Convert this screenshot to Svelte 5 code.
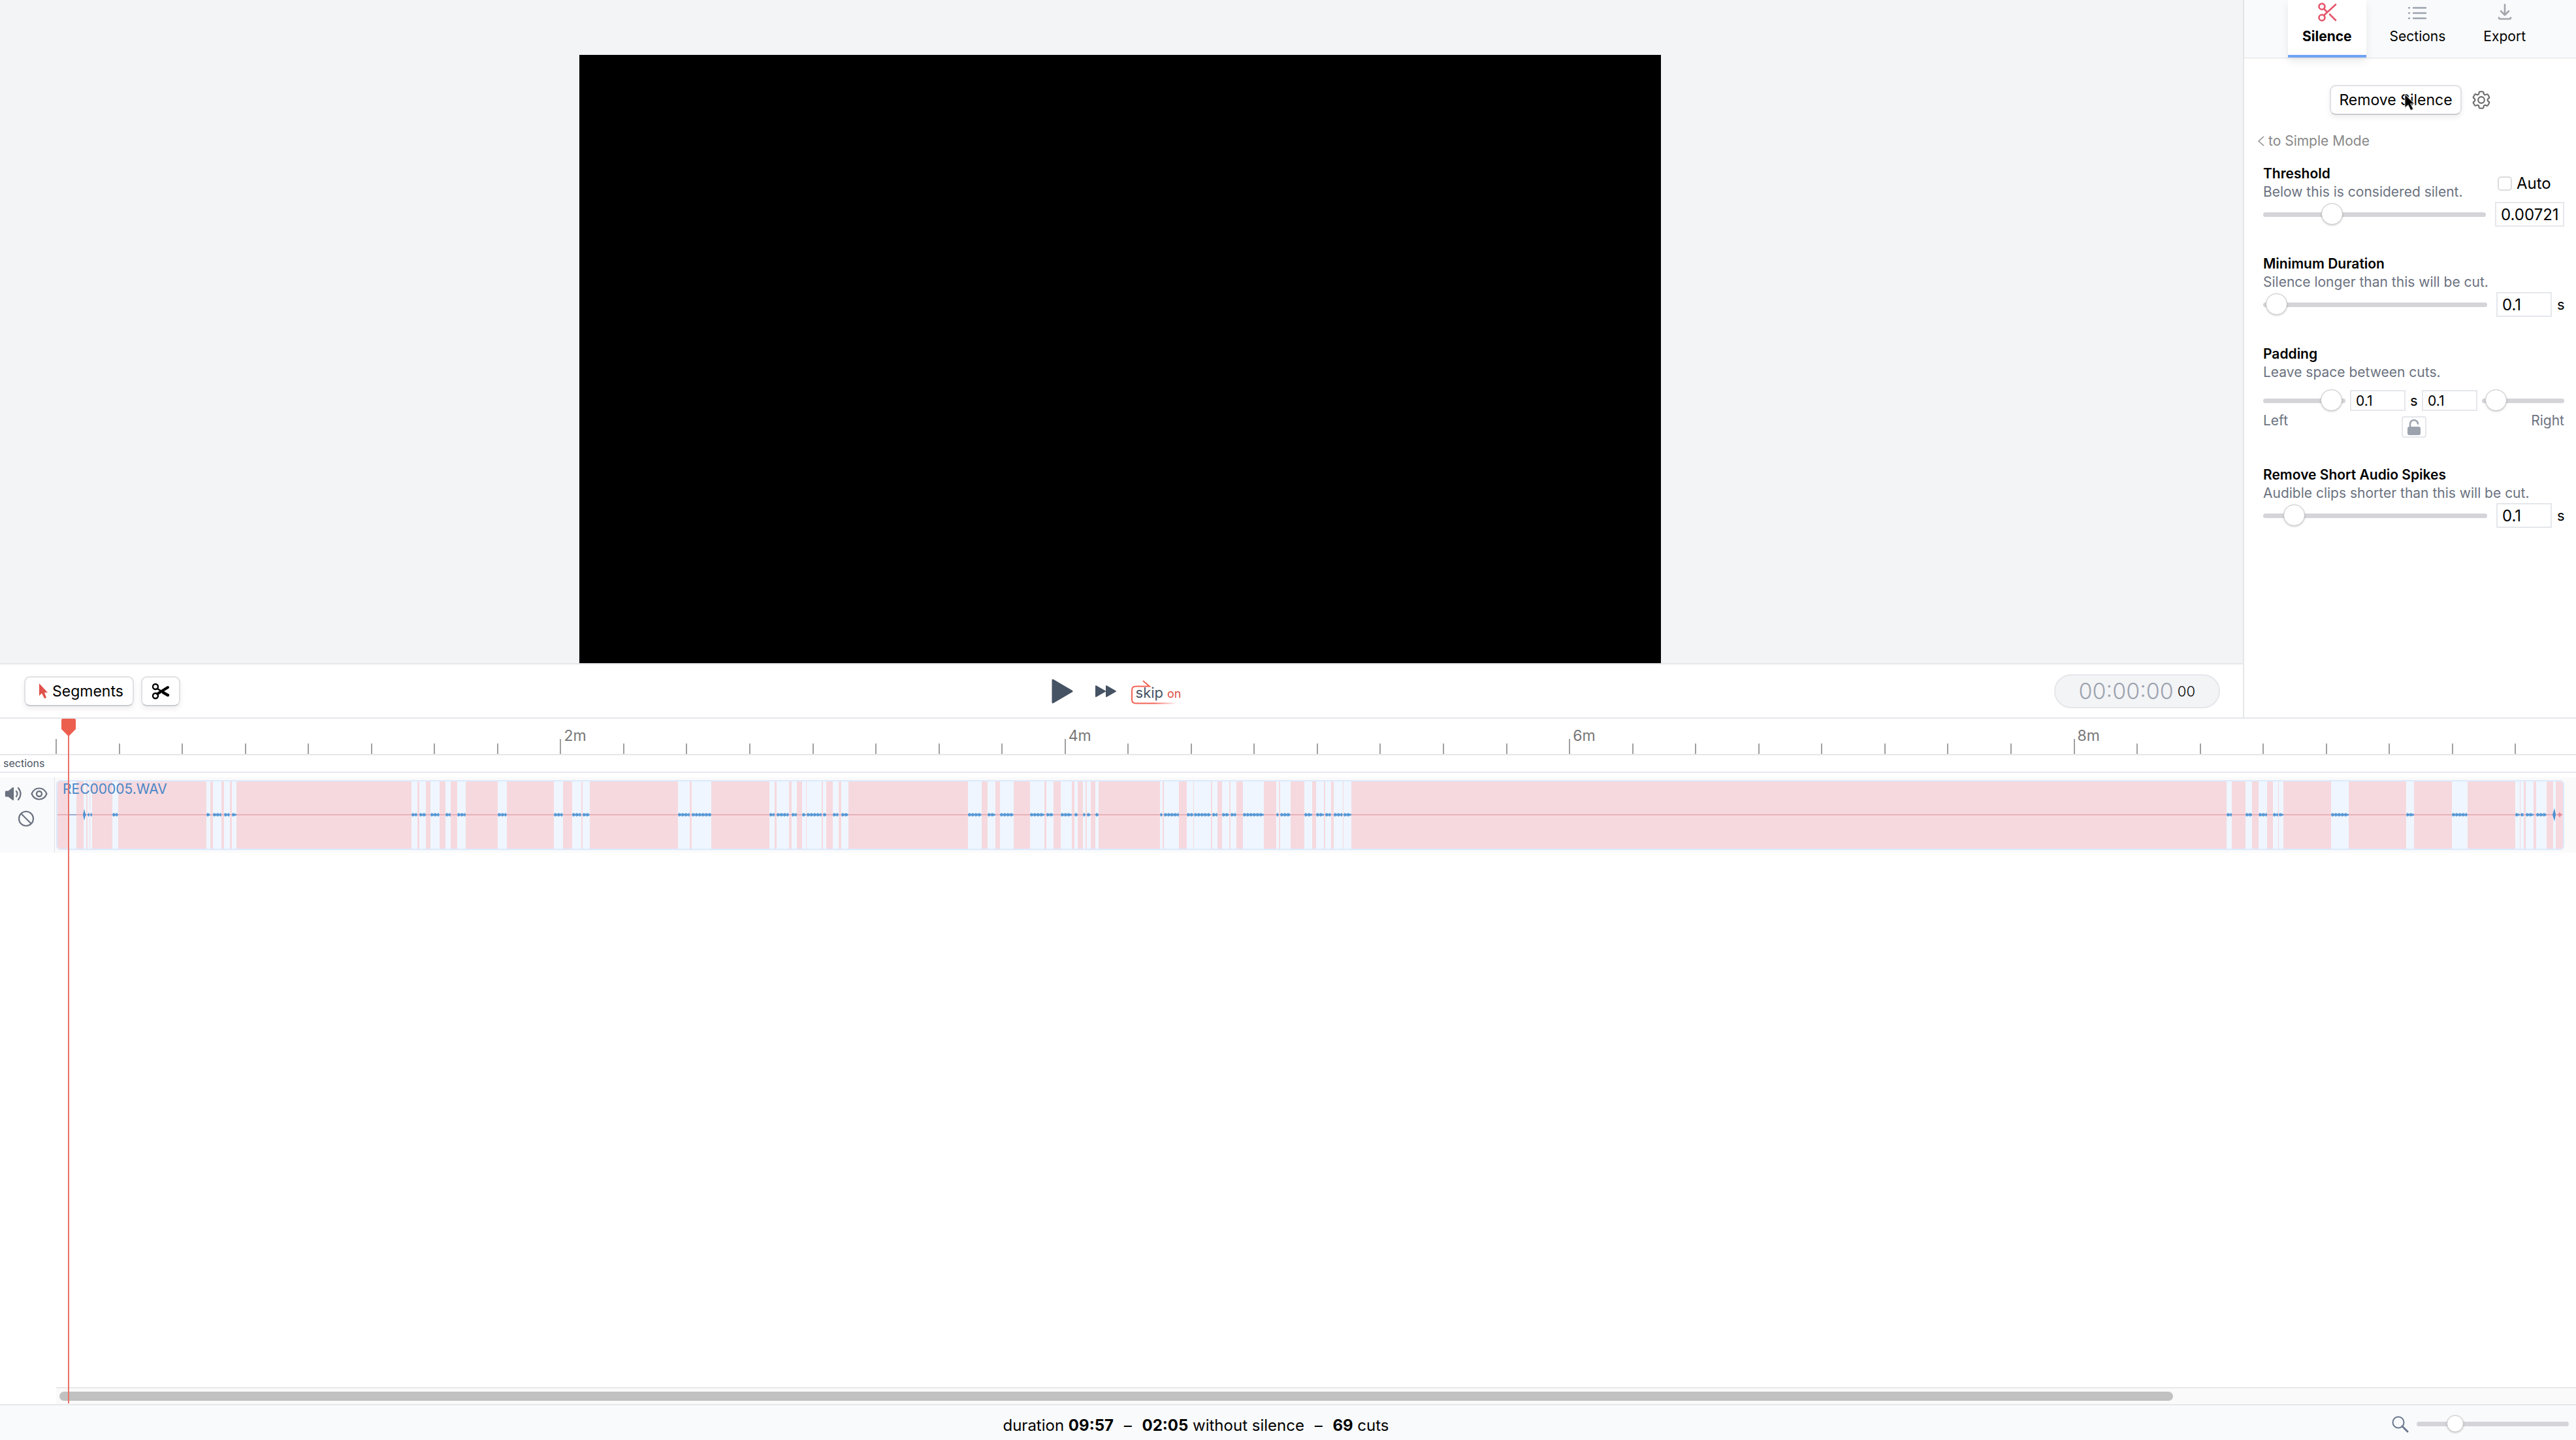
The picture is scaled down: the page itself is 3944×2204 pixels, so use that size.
<!--
  App.svelte -- Silence editor: preview, silence settings, transport and timeline.
-->
<script lang="ts">
  type Range = [start: number, end: number];

  const TABS = ['Silence', 'Sections', 'Export'];

  // Timeline scale: one tick per 15 s, one label per 2 min.
  const DURATION = 597;
  const TICK = 15;
  const ticks = Array.from({ length: Math.ceil(DURATION / TICK) }, (_, i) => {
    const start = i * TICK;
    return {
      span: Math.min(TICK, DURATION - start),
      major: start % 120 === 0,
      label: start > 0 && start % 120 === 0 ? `${start / 60}m` : '',
    };
  });

  // Audible ranges, in waveform columns.
  const COLUMNS = 3840;
  const MIDDLE = 53;
  const audible: Range[] = [
    [19, 31], [42, 46], [48, 51], [52, 55], [86, 95], [230, 236], [240, 253],
    [257, 266], [269, 276], [544, 553], [556, 566], [573, 587], [596, 604],
    [614, 627], [676, 690], [762, 776], [790, 804], [806, 817], [952, 970],
    [973, 1003], [1092, 1100], [1103, 1122], [1126, 1134], [1142, 1148],
    [1149, 1172], [1174, 1179], [1189, 1198], [1202, 1213], [1396, 1417],
    [1426, 1438], [1445, 1466], [1491, 1513], [1516, 1527], [1538, 1555],
    [1559, 1564], [1572, 1576], [1578, 1584], [1591, 1596], [1690, 1694],
    [1696, 1719], [1731, 1741], [1742, 1768], [1770, 1778], [1785, 1796],
    [1798, 1807], [1817, 1849], [1868, 1872], [1874, 1890], [1911, 1923],
    [1929, 1941], [1943, 1952], [1956, 1970], [1971, 1983], [3323, 3331],
    [3352, 3362], [3372, 3385], [3394, 3402], [3403, 3410], [3483, 3510],
    [3598, 3610], [3668, 3692], [3765, 3772], [3773, 3778], [3781, 3793],
    [3797, 3813], [3823, 3827],
  ];

  const silent = audible.map(([, end], i): Range => [end, audible[i + 1]?.[0] ?? COLUMNS]);
  silent.unshift([0, audible[0][0]]);

  function wave([start, end]: Range): string {
    const top: string[] = [];
    const bottom: string[] = [];
    for (let x = start; x <= end; x += 1) {
      const edge = x === start || x === end;
      const quiet = start < 30;
      const amp = quiet || edge ? 0.6 : 0.8 + ((x * 7 + start * 3) % 5) * 0.6;
      top.push(`${x},${MIDDLE - amp}`);
      bottom.unshift(`${x},${MIDDLE + amp}`);
    }
    return [...top, ...bottom].join(' ');
  }

  let tab = $state('Silence');
  let auto = $state(false);
  let threshold = $state(0.00721);
  let minDuration = $state(0.1);
  let padLeft = $state(0.1);
  let padRight = $state(0.1);
  let spikes = $state(0.1);
  let zoom = $state(22);
</script>

<div class="app">
  <div class="upper">
    <main class="editor">
      <div class="stage">
        <div class="video"></div>
      </div>

      <div class="toolbar">
        <div class="tools">
          <button class="btn">
            <svg width="15" height="24" viewBox="0 0 15 24" aria-hidden="true">
              <path d="M1 0v19l4-4 4 8 3-1-3-8h5z" fill="#e0524b" />
            </svg>
            Segments
          </button>
          <button class="btn btn-cut" aria-label="Split">
            <svg width="28" height="26" viewBox="0 0 28 26" fill="none" stroke="#000" aria-hidden="true">
              <circle cx="6" cy="6" r="4" stroke-width="2.4" />
              <circle cx="6" cy="20" r="4" stroke-width="2.4" />
              <path d="M9 17 25 7" stroke-width="4" stroke-linecap="round" />
              <path d="M9 9l6 4" stroke-width="2.4" />
              <path d="M18 15l7 4" stroke-width="4.4" stroke-linecap="round" />
            </svg>
          </button>
        </div>

        <div class="transport">
          <button class="plain" aria-label="Play">
            <svg width="33" height="38" viewBox="0 0 33 38" aria-hidden="true">
              <path d="M2 2v34l29-17z" fill="#465364" stroke="#465364" stroke-width="3" stroke-linejoin="round" />
            </svg>
          </button>
          <button class="plain" aria-label="Fast forward">
            <svg width="34" height="20" viewBox="0 0 34 20" aria-hidden="true">
              <path d="M2 2v16l14-8zM18 2v16l14-8z" fill="#465364" stroke="#465364" stroke-width="2" stroke-linejoin="round" />
            </svg>
          </button>
          <button class="plain skip">
            <svg width="76" height="38" viewBox="0 0 76 38" fill="none" aria-hidden="true">
              <defs>
                <linearGradient id="fade" gradientUnits="userSpaceOnUse" x1="0" y1="0" x2="72" y2="0">
                  <stop offset="0.5" stop-color="#f26355" />
                  <stop offset="1" stop-color="#f26355" stop-opacity="0" />
                </linearGradient>
              </defs>
              <path d="M19 2l10 8.500H8q-6 0-6 6v14q0 6 6 6h64" stroke="url(#fade)" stroke-width="2" />
            </svg>
            <span>skip</span>
            <span class="on">on</span>
          </button>
        </div>

        <div class="timecode">
          <span class="clock">00:00:00</span>
          <span class="frames">00</span>
        </div>
      </div>
    </main>

    <aside class="panel">
      <nav class="tabs">
        {#each TABS as name}
          <button class="tab" class:active={tab === name} onclick={() => (tab = name)}>
            {#if name === 'Silence'}
              <svg width="30" height="30" viewBox="0 0 30 30" fill="none" stroke="#e5566d" stroke-width="2.6" stroke-linecap="round" aria-hidden="true">
                <circle cx="7" cy="6" r="4.5" />
                <circle cx="7" cy="23" r="4.5" />
                <path d="M10 19.500 28 3M10 9.500l5 5M19 18l9 9" />
              </svg>
            {:else if name === 'Sections'}
              <svg width="30" height="30" viewBox="0 0 30 30" fill="none" stroke="#9ca3af" stroke-width="2.400" stroke-linecap="round" aria-hidden="true">
                <path d="M9 8h19M9 16h19M9 24h19M2 8h1M2 16h1M2 24h1" />
              </svg>
            {:else}
              <svg width="30" height="30" viewBox="0 0 30 30" fill="none" stroke="#a3a6ad" stroke-width="2.600" stroke-linecap="round" stroke-linejoin="round" aria-hidden="true">
                <path d="M15 3v16M9 13l6 6 6-6M6 23q0 2 2 2h14q2 0 2-2" />
              </svg>
            {/if}
            {name}
          </button>
        {/each}
      </nav>

      <div class="settings">
        <div class="actions">
          <button class="btn">Remove Silence</button>
          <button class="plain" aria-label="Silence settings">
            <svg width="34" height="34" viewBox="0 0 24 24" fill="none" stroke="#6b6b6b" stroke-width="1.500" stroke-linejoin="round" aria-hidden="true">
              <path d="M9.600 3.900c.1-.6.600-.9 1.100-.9h2.600c.5 0 1 .4 1.100.9l.2 1.300c.1.400.3.700.6.900l.3.200c.4.200.8.200 1.100.1l1.200-.5c.5-.2 1.100 0 1.400.5l1.300 2.200c.3.500.2 1.100-.3 1.400l-1 .8c-.3.300-.4.600-.4 1v.4c0 .4.100.7.400 1l1 .8c.4.400.5 1 .3 1.400l-1.300 2.200c-.3.500-.9.700-1.400.5l-1.200-.5c-.4-.1-.8-.1-1.100.1l-.3.200c-.3.200-.6.500-.6.900l-.2 1.300c-.1.500-.6.900-1.100.9h-2.600c-.5 0-1-.4-1.100-.9l-.2-1.300c-.1-.4-.3-.7-.6-.9l-.3-.2c-.4-.2-.8-.2-1.100-.1l-1.200.5c-.5.200-1.100 0-1.400-.5L3.500 15.400c-.3-.5-.2-1.100.3-1.400l1-.8c.3-.3.400-.6.400-1v-.4c0-.4-.1-.7-.4-1l-1-.8c-.4-.4-.5-1-.3-1.400l1.300-2.200c.3-.5.900-.7 1.400-.5l1.200.5c.4.100.8.100 1.100-.1l.3-.2c.3-.2.600-.5.600-.9z" />
              <circle cx="12" cy="12" r="3.400" />
            </svg>
          </button>
          <svg class="pointer" width="20" height="30" viewBox="0 0 20 30" aria-hidden="true">
            <path d="M3 2v21l5-4 4 8 4-2-4-8h6z" fill="#000" stroke="#fff" stroke-opacity="0.6" stroke-width="1.500" />
          </svg>
        </div>

        <a class="mode" href="#simple">
          <svg width="10" height="18" viewBox="0 0 10 18" fill="none" stroke="#888" stroke-width="1.500" aria-hidden="true">
            <path d="M9 2 1 9l8 7" />
          </svg>
          to Simple Mode
        </a>

        <section class="field">
          <div class="head">
            <div>
              <h2>Threshold</h2>
              <p>Below this is considered silent.</p>
            </div>
            <label class="auto"><input type="checkbox" bind:checked={auto} />Auto</label>
          </div>
          <div class="row">
            <input type="range" min="0" max="0.025" step="any" bind:value={threshold} aria-label="Threshold" />
            <input class="wide" type="number" step="any" bind:value={threshold} aria-label="Threshold value" />
          </div>
        </section>

        <section class="field">
          <h2>Minimum Duration</h2>
          <p>Silence longer than this will be cut.</p>
          <div class="row">
            <input type="range" min="0" max="7" step="any" bind:value={minDuration} aria-label="Minimum duration" />
            <div class="amount">
              <input type="number" step="any" bind:value={minDuration} aria-label="Minimum duration value" />
              <span class="unit">s</span>
            </div>
          </div>
        </section>

        <section class="field">
          <h2>Padding</h2>
          <p>Leave space between cuts.</p>
          <div class="row row-pad">
            <input class="reverse" type="range" min="0" max="2" step="any" bind:value={padLeft} aria-label="Left padding" />
            <input type="number" step="any" bind:value={padLeft} aria-label="Left padding value" />
            <span class="unit">s</span>
            <input type="number" step="any" bind:value={padRight} aria-label="Right padding value" />
            <input type="range" min="0" max="2" step="any" bind:value={padRight} aria-label="Right padding" />
          </div>
          <div class="sides">
            <p>Left</p>
            <button class="lock" aria-label="Link left and right padding">
              <svg width="22" height="26" viewBox="0 0 22 26" aria-hidden="true">
                <rect x="1" y="12" width="20" height="13" rx="3" fill="#9ca3af" />
                <path d="M5 13V8.500a6 6 0 0 1 12-1" fill="none" stroke="#9ca3af" stroke-width="2.600" stroke-linecap="round" />
              </svg>
            </button>
            <p class="right">Right</p>
          </div>
        </section>

        <section class="field">
          <h2>Remove Short Audio Spikes</h2>
          <p>Audible clips shorter than this will be cut.</p>
          <div class="row">
            <input type="range" min="0" max="1" step="any" bind:value={spikes} aria-label="Shortest audio clip" />
            <div class="amount">
              <input type="number" step="any" bind:value={spikes} aria-label="Shortest audio clip value" />
              <span class="unit">s</span>
            </div>
          </div>
        </section>
      </div>
    </aside>
  </div>

  <section class="timeline">
    <div class="ruler">
      {#each ticks as tick}
        <div class="tick" class:major={tick.major} style="flex-grow: {tick.span}">
          <span>{tick.label}</span>
        </div>
      {/each}
    </div>

    <div class="sections">sections</div>

    <div class="track">
      <div class="track-head">
        <button class="plain" aria-label="Mute">
          <svg width="28" height="24" viewBox="0 0 28 24" fill="none" stroke="#6b7280" stroke-width="2.200" stroke-linecap="round" aria-hidden="true">
            <path d="M2 8.500h4l7-5.500v18l-7-5.500H2z" fill="#6b7280" stroke-linejoin="round" />
            <path d="M18 8q3 4 0 8M21 3q7 9 0 18" />
          </svg>
        </button>
        <button class="plain" aria-label="Hide">
          <svg width="26" height="22" viewBox="0 0 26 22" fill="none" stroke="#6b7280" stroke-width="2.200" aria-hidden="true">
            <path d="M1.500 11Q5 2.500 13 2.500T24.500 11Q21 19.500 13 19.500T1.500 11z" />
            <circle cx="13" cy="11" r="4" stroke-width="2.400" />
          </svg>
        </button>
        <button class="plain" aria-label="Disable">
          <svg width="26" height="26" viewBox="0 0 26 26" fill="none" stroke="#6b7280" stroke-width="2.200" aria-hidden="true">
            <circle cx="13" cy="13" r="11" />
            <path d="M5 5l16 16" />
          </svg>
        </button>
      </div>
      <div class="clip">
        <svg viewBox="0 0 {COLUMNS} 107" preserveAspectRatio="none" aria-hidden="true">
          {#each silent as [start, end]}
            <rect x={start} y="0" width={end - start} height="107" fill="#f6d9de" />
          {/each}
          <rect x="0" y="52.500" width={COLUMNS} height="1" fill="#d98a94" />
          {#each audible as range}
            <polygon points={wave(range)} fill="#5596d3" />
          {/each}
          <path d="M41 53l2-9 2 9-2 9zM3822 53l3-10 2 10-2 10z" fill="#4d90d0" />
          <path d="M3830 53l3-4 3 4-3 4z" fill="#e48a97" />
        </svg>
        <span class="clip-name">REC00005.WAV</span>
      </div>
    </div>

    <div class="scrollbar">
      <div class="scrollbar-thumb"></div>
    </div>

    <div class="playhead">
      <svg width="24" height="27" viewBox="0 0 24 27" aria-hidden="true">
        <path d="M3 0h18q2 0 2 2v14L12 27 1 16V2q0-2 2-2z" fill="#ec5f4f" />
      </svg>
    </div>
  </section>

  <footer class="status">
    <p>
      duration <b>09:57</b> <span class="dash">–</span> <b>02:05</b> without silence
      <span class="dash">–</span> <b>69</b> cuts
    </p>
    <svg width="26" height="26" viewBox="0 0 26 26" fill="none" stroke="#6b7890" aria-hidden="true">
      <circle cx="10" cy="10" r="8.500" stroke-width="2" />
      <path d="M16 16l8 8" stroke-width="3" stroke-linecap="round" />
    </svg>
    <input class="zoom" type="range" min="0" max="100" bind:value={zoom} aria-label="Timeline zoom" />
  </footer>
</div>

<style>
  :global(body) {
    margin: 0;
  }

  .app {
    display: flex;
    flex-direction: column;
    min-height: 100vh;
    background: #fff;
    color: #000;
    font-family: Inter, 'Liberation Sans', sans-serif;
    font-size: 22px;
    line-height: 28px;
  }

  .app * {
    box-sizing: border-box;
  }

  svg {
    display: block;
  }

  h2,
  p {
    margin: 0;
    font-size: 21px;
    line-height: 28px;
  }

  h2 {
    font-weight: 600;
  }

  button,
  input {
    font: inherit;
    color: inherit;
  }

  .plain {
    padding: 0;
    border: none;
    background: none;
    cursor: pointer;
  }

  .btn {
    display: flex;
    align-items: center;
    gap: 6px;
    height: 46px;
    padding: 0 12px;
    border: 2px solid #e0e1e5;
    border-bottom-color: #c9cbd0;
    border-radius: 9px;
    background: #fff;
    box-shadow: 0 4px 8px rgba(0, 0, 0, 0.07);
    font-size: 23px;
    cursor: pointer;
  }

  .upper {
    display: flex;
    height: calc(50vh - 2px);
    border-bottom: 2px solid #e5e7eb;
    box-sizing: border-box;
  }

  .editor {
    display: flex;
    flex: 1;
    flex-direction: column;
    min-width: 0;
  }

  .stage {
    display: flex;
    flex: 1;
    justify-content: center;
    min-height: 0;
    padding: 84px 4px 0 0;
    border-bottom: 2px solid #e5e7eb;
    background: #f3f4f6;
  }

  .video {
    height: 100%;
    aspect-ratio: 16 / 9;
    background: #000;
  }

  .toolbar {
    display: grid;
    grid-template-columns: 1fr auto 1fr;
    align-items: center;
    height: 81px;
    padding: 0 35px 0 37px;
  }

  .tools {
    display: flex;
    gap: 11px;
  }

  .tools .btn {
    padding: 0 14px 0 20px;
  }

  .tools .btn-cut {
    padding: 0 14px;
  }

  .transport {
    display: flex;
    align-items: center;
    gap: 33px;
    padding-right: 18px;
    color: #465364;
  }

  .skip {
    position: relative;
    display: flex;
    align-items: baseline;
    gap: 6px;
    margin-left: -12px;
    padding: 6px 0 0 8px;
  }

  .skip svg {
    position: absolute;
    left: 0;
    top: 0;
  }

  .on {
    color: #dc5246;
    font-size: 18px;
  }

  .timecode {
    display: flex;
    align-items: center;
    justify-self: end;
    gap: 6px;
    height: 52px;
    padding: 0 36px;
    border: 2px solid #e5e7eb;
    border-radius: 26px;
    background: #f3f4f6;
    font-weight: 300;
  }

  .clock {
    color: #9ca3af;
    font-size: 34px;
  }

  .frames {
    font-size: 22px;
  }

  .panel {
    flex: none;
    width: 510px;
    border-left: 2px solid #e5e7eb;
  }

  .tabs {
    display: flex;
    justify-content: center;
    gap: 14px;
    height: 89px;
    padding-left: 12px;
    border-bottom: 1px solid #e5e7eb;
    background: #f9fafb;
    box-shadow: 0 1px 3px rgba(0, 0, 0, 0.05);
  }

  .tab {
    display: flex;
    flex-direction: column;
    align-items: center;
    gap: 8px;
    height: 88px;
    padding: 4px 22px 0;
    border: none;
    border-bottom: 4px solid transparent;
    background: none;
    font-size: 21px;
    line-height: 28px;
    cursor: pointer;
  }

  .tab.active {
    border-bottom-color: #6ea3f5;
    background: #fff;
    box-shadow: 0 6px 12px rgba(0, 0, 0, 0.08);
    font-weight: 700;
  }

  .settings {
    padding: 41px 18px 42px 21px;
  }

  .actions {
    position: relative;
    display: flex;
    align-items: center;
    justify-content: center;
    gap: 13px;
  }

  .pointer {
    position: absolute;
    left: 222px;
    top: 12px;
  }

  .mode {
    display: flex;
    align-items: center;
    gap: 6px;
    margin-top: 26px;
    color: #888;
    font-size: 21px;
    text-decoration: none;
  }

  .field {
    margin: 0 0 43px 8px;
  }

  .mode + .field {
    margin-top: 22px;
  }

  .field p {
    color: #6b7280;
  }

  .head {
    display: flex;
    align-items: center;
    justify-content: space-between;
  }

  .auto {
    display: flex;
    align-items: center;
    gap: 7px;
    width: 102px;
    padding-top: 2px;
    font-size: 24px;
  }

  .auto input {
    appearance: none;
    width: 22px;
    height: 22px;
    margin: 0;
    border: 2px solid #dcdcdc;
    border-radius: 5px;
    background: #fff;
  }

  .auto input:checked {
    background: #6ea3f5;
  }

  .row {
    display: flex;
    align-items: center;
    gap: 14px;
    margin-top: 1px;
  }

  .row-pad {
    gap: 7px;
    margin-top: 12px;
  }

  .amount {
    display: flex;
    align-items: center;
    gap: 8px;
  }

  .unit {
    width: 11px;
  }

  input[type='number'] {
    appearance: textfield;
    flex: none;
    width: 85px;
    height: 38px;
    margin: 0;
    padding: 0 0 0 7px;
    border: 2px solid #e5e7eb;
    background: #fff;
    font-size: 24px;
  }

  input[type='number']::-webkit-inner-spin-button {
    display: none;
  }

  input[type='number'].wide {
    width: 106px;
  }

  .row-pad input[type='number'] {
    height: 32px;
    font-size: 21px;
  }

  input[type='range'] {
    appearance: none;
    flex: 1;
    min-width: 0;
    height: 34px;
    margin: 0;
    background: none;
  }

  input[type='range']::-webkit-slider-runnable-track {
    height: 7px;
    border-radius: 4px;
    background: #d4d4d9;
  }

  input[type='range']::-webkit-slider-thumb {
    appearance: none;
    width: 33px;
    height: 33px;
    margin-top: -14px;
    border: 1px solid #c8c8c8;
    border-radius: 50%;
    background: #fff;
    box-shadow: 0 1px 3px rgba(0, 0, 0, 0.2);
  }

  .reverse {
    direction: rtl;
  }

  .sides {
    display: grid;
    grid-template-columns: 1fr auto 1fr;
    align-items: start;
  }

  .right {
    text-align: right;
  }

  .lock {
    display: flex;
    align-items: center;
    justify-content: center;
    width: 38px;
    height: 33px;
    margin-top: 7px;
    padding: 0;
    border: 2px solid #e5e7eb;
    border-radius: 4px;
    background: #fff;
  }

  .timeline {
    position: relative;
    display: flex;
    flex: 1;
    flex-direction: column;
  }

  .ruler {
    display: flex;
    align-items: flex-end;
    height: 56px;
    padding: 0 16px 0 85px;
    border-bottom: 2px solid #e5e7eb;
  }

  .tick {
    position: relative;
    flex: 1 1 0;
    height: 16px;
    border-left: 2px solid #a0a0a0;
  }

  .major {
    height: 23px;
  }

  .tick span {
    position: absolute;
    left: 4px;
    bottom: 14px;
    color: #777;
    font-size: 23px;
  }

  .sections {
    height: 27px;
    padding-left: 5px;
    border-bottom: 2px solid #e5e7eb;
    color: #4b5563;
    font-size: 16px;
    line-height: 24px;
  }

  .track {
    display: flex;
    height: 115px;
    margin-top: 7px;
    padding-right: 18px;
    background: #fafafa;
  }

  .track-head {
    display: flex;
    flex-wrap: wrap;
    align-content: flex-start;
    align-items: center;
    justify-content: center;
    gap: 13px 12px;
    width: 84px;
    padding: 13px 4px 0 0;
    border-right: 1px solid #e0e2e6;
    background: #f9fafb;
  }

  .clip {
    position: relative;
    flex: 1;
    margin: 4px 0 4px 2px;
    border-radius: 7px;
    background: #eff6ff;
    overflow: hidden;
  }

  .clip::after {
    content: '';
    position: absolute;
    inset: 0;
    border: 2px solid #dbeafe;
    border-radius: 7px;
  }

  .clip svg {
    width: 100%;
    height: 100%;
  }

  .clip-name {
    position: absolute;
    left: 10px;
    top: 0;
    color: #4a86c6;
    font-size: 21px;
  }

  .scrollbar {
    height: 26px;
    margin: auto 0 0 86px;
    padding: 5px;
    border-top: 2px solid #e8e8e8;
    background: #fafafa;
  }

  .scrollbar-thumb {
    width: 84.1%;
    height: 14px;
    border-radius: 7px;
    background: #c1c1c1;
  }

  .playhead {
    position: absolute;
    left: 93px;
    top: 0;
    bottom: 1px;
    width: 24px;
    background: linear-gradient(#ec7068, #ec7068) 11px 0 / 2px 100% no-repeat;
  }

  .status {
    display: flex;
    align-items: center;
    height: 55px;
    padding: 4px 11px 0 0;
    border-top: 2px solid #e5e7eb;
    background: #f9fafb;
    box-sizing: border-box;
  }

  .status p {
    flex: 1;
    padding-top: 4px;
    font-size: 24px;
    text-align: center;
  }

  .status b {
    font-weight: 700;
  }

  .dash {
    margin: 0 9px;
  }

  .status .zoom {
    flex: none;
    width: 233px;
    margin-left: 12px;
  }

  .status .zoom::-webkit-slider-thumb {
    width: 26px;
    height: 26px;
    margin-top: -10px;
  }
</style>
